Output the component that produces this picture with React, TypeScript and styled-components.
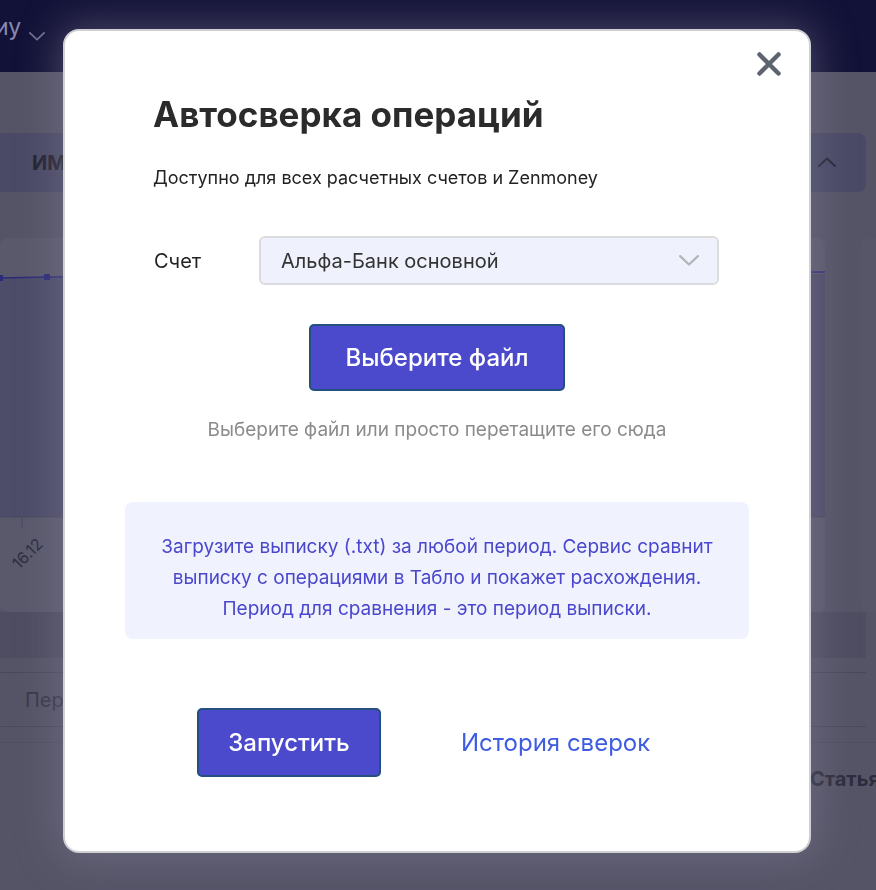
import React from 'react'
import styled, { createGlobalStyle } from 'styled-components'

const GlobalStyle = createGlobalStyle`
  * { box-sizing: border-box; }
  html, body { margin: 0; padding: 0; }
  body {
    font-family: Inter, "Noto Sans", "DejaVu Sans", sans-serif;
    background: #565568;
    overflow: hidden;
  }
`

// page under the dimmed backdrop
const Page = styled.div`
  width: 876px;
  height: 890px;
  background: #555467;
  overflow: hidden;
`

const TopBar = styled.header`
  height: 72px;
  background: #121137;
  display: flex;
  align-items: flex-start;
  padding-top: 13px;
  gap: 8px;
  color: #8a8aae;
  font-size: 23px;
  margin-left: -5px;
`

const Content = styled.div`
  padding: 61px 10px 0 0;
  display: flex;
  flex-direction: column;
`

const SectionHead = styled.div`
  height: 59px;
  margin-left: -20px;
  border-radius: 8px;
  background: #4a4966;
  display: flex;
  align-items: center;
  justify-content: space-between;
  padding: 0 30px 0 52px;
  font-weight: 700;
  font-size: 20px;
  color: #23222f;
`

const Charts = styled.div`
  margin-top: 46px;
  height: 374px;
  display: grid;
  grid-template-columns: 825px 1fr;
  gap: 35px;
  margin-right: -40px;
`

const ChartCard = styled.div`
  border-radius: 8px;
  background: #5a596c;
  overflow: hidden;
`

const SideCard = styled.div`
  border-radius: 8px;
  background: #575669;
`

const ChartSvg = styled.svg`
  display: block;
`

const Band = styled.div`
  height: 46px;
  background: #4e4d61;
`

const FilterRow = styled.div`
  margin-top: 14px;
  height: 55px;
  border-top: 1px solid #4a495c;
  border-bottom: 1px solid #4a495c;
  display: flex;
  align-items: center;
  padding-left: 25px;
  font-size: 20px;
  color: #37364a;
`

const TableHead = styled.div`
  margin-top: 15px;
  height: 72px;
  border-top: 1px solid #4f4e62;
  display: flex;
  align-items: center;
  padding-left: 810px;
  margin-right: -100px;
  font-size: 20px;
  font-weight: 700;
  color: #2d2c3c;
  white-space: nowrap;
`

// modal
const Backdrop = styled.div`
  position: fixed;
  inset: 0;
  display: flex;
  justify-content: center;
  align-items: flex-start;
  padding-top: 29px;
`

const Modal = styled.div`
  position: relative;
  width: 748px;
  height: 824px;
  margin-right: 2px;
  background: #fff;
  border: 2px solid #cfcfd4;
  border-radius: 16px;
  box-shadow: 0 0 40px 6px rgba(130, 129, 150, 0.45);
  padding: 62px 89px 0;
  display: flex;
  flex-direction: column;
`

const Close = styled.button`
  position: absolute;
  top: 20px;
  right: 27px;
  width: 26px;
  height: 26px;
  padding: 0;
  border: 0;
  background: none;
  cursor: pointer;
`

const Title = styled.h1`
  margin: 0 0 0 -1px;
  font-size: 35px;
  line-height: 42px;
  font-weight: 700;
  color: #2b2b2b;
`

const Subtitle = styled.p`
  margin: 31px 0 0 -1px;
  font-size: 18px;
  line-height: 24px;
  color: #222;
`

const Field = styled.div`
  margin-top: 46px;
  display: flex;
  align-items: center;
`

const Label = styled.span`
  width: 105px;
  font-size: 20px;
  color: #222;
`

const Select = styled.div`
  flex: 1;
  height: 49px;
  margin-right: 1px;
  background: #eff2fd;
  border: 2px solid #dcdcdf;
  border-radius: 6px;
  display: flex;
  align-items: center;
  justify-content: space-between;
  padding: 0 18px 0 20px;
  font-size: 20px;
  color: #333;
`

const Button = styled.button<{ $w: number; $h: number }>`
  width: ${p => p.$w}px;
  height: ${p => p.$h}px;
  background: #4b49cc;
  border: 2px solid #23507e;
  border-radius: 5px;
  color: #fff;
  font-family: inherit;
  font-size: 24px;
  font-weight: 500;
  cursor: pointer;
`

const FileWrap = styled.div`
  margin-top: 39px;
  display: flex;
  justify-content: center;
`

const Hint = styled.p`
  margin: 27px 0 0;
  text-align: center;
  font-size: 19px;
  line-height: 24px;
  color: #8b8b8b;
`

const Info = styled.div`
  margin: 60px -29px 0;
  height: 137px;
  background: #f0f3fe;
  border-radius: 8px;
  padding: 29px 10px 0;
  text-align: center;
  font-size: 19px;
  line-height: 31px;
  color: #4a47cc;
  white-space: nowrap;
`

const Actions = styled.div`
  margin-top: 69px;
  padding-left: 43px;
  display: flex;
  align-items: center;
  gap: 80px;
`

const LinkButton = styled.a`
  font-size: 24px;
  color: #3f5de0;
  text-decoration: none;
  cursor: pointer;
`

function Chevron({ up, color, w = 18 }: { up?: boolean; color: string; w?: number }) {
  return (
    <svg width={w} height={w * 0.56} viewBox="0 0 18 10" fill="none">
      <path
        d={up ? 'M1 9L9 1.5L17 9' : 'M1 1L9 8.5L17 1'}
        stroke={color}
        strokeWidth="2"
        strokeLinecap="round"
        strokeLinejoin="round"
      />
    </svg>
  )
}

export default function App() {
  return (
    <>
      <GlobalStyle />
      <Page>
        <TopBar>
          <span>иу</span>
          <span style={{ marginTop: 6 }}>
            <Chevron color="#6f6f96" w={16} />
          </span>
        </TopBar>
        <Content>
          <SectionHead>
            <span>ИМ</span>
            <Chevron up color="#272637" w={18} />
          </SectionHead>
          <Charts>
            <ChartCard>
              <ChartSvg width="825" height="374" viewBox="0 0 825 374">
                <path d="M0 40 L825 36 L825 279 L0 279 Z" fill="#4d4c69" />
                <path d="M0 40 L47 39 L825 34" stroke="#2c2b7a" strokeWidth="1.5" fill="none" />
                <rect x="-3" y="37" width="6" height="6" fill="#2c2b7a" />
                <rect x="44" y="36" width="6" height="6" fill="#2c2b7a" />
                <line x1="0" y1="279" x2="825" y2="279" stroke="#4a4960" strokeWidth="1" />
                <line x1="22" y1="279" x2="22" y2="290" stroke="#4a4960" strokeWidth="1" />
                <text
                  x="0"
                  y="0"
                  fontSize="16"
                  fill="#2e2d3d"
                  fontFamily="Inter, sans-serif"
                  transform="translate(19 332) rotate(-45)"
                >
                  16.12
                </text>
              </ChartSvg>
            </ChartCard>
            <SideCard />
          </Charts>
          <Band />
          <FilterRow>Период</FilterRow>
          <TableHead>Статья</TableHead>
        </Content>
      </Page>

      <Backdrop>
        <Modal>
          <Close aria-label="Закрыть">
            <svg width="26" height="26" viewBox="0 0 26 26">
              <path
                d="M3.5 3.5L22.5 22.5M22.5 3.5L3.5 22.5"
                stroke="#5e646f"
                strokeWidth="4.5"
                strokeLinecap="round"
              />
            </svg>
          </Close>
          <Title>Автосверка операций</Title>
          <Subtitle>Доступно для всех расчетных счетов и Zenmoney</Subtitle>
          <Field>
            <Label>Счет</Label>
            <Select>
              <span>Альфа-Банк основной</span>
              <Chevron color="#b3b3b8" w={20} />
            </Select>
          </Field>
          <FileWrap>
            <Button $w={256} $h={67}>Выберите файл</Button>
          </FileWrap>
          <Hint>Выберите файл или просто перетащите его сюда</Hint>
          <Info>
            Загрузите выписку (.txt) за любой период. Сервис сравнит
            <br />
            выписку с операциями в Табло и покажет расхождения.
            <br />
            Период для сравнения - это период выписки.
          </Info>
          <Actions>
            <Button $w={184} $h={69}>Запустить</Button>
            <LinkButton>История сверок</LinkButton>
          </Actions>
        </Modal>
      </Backdrop>
    </>
  )
}
